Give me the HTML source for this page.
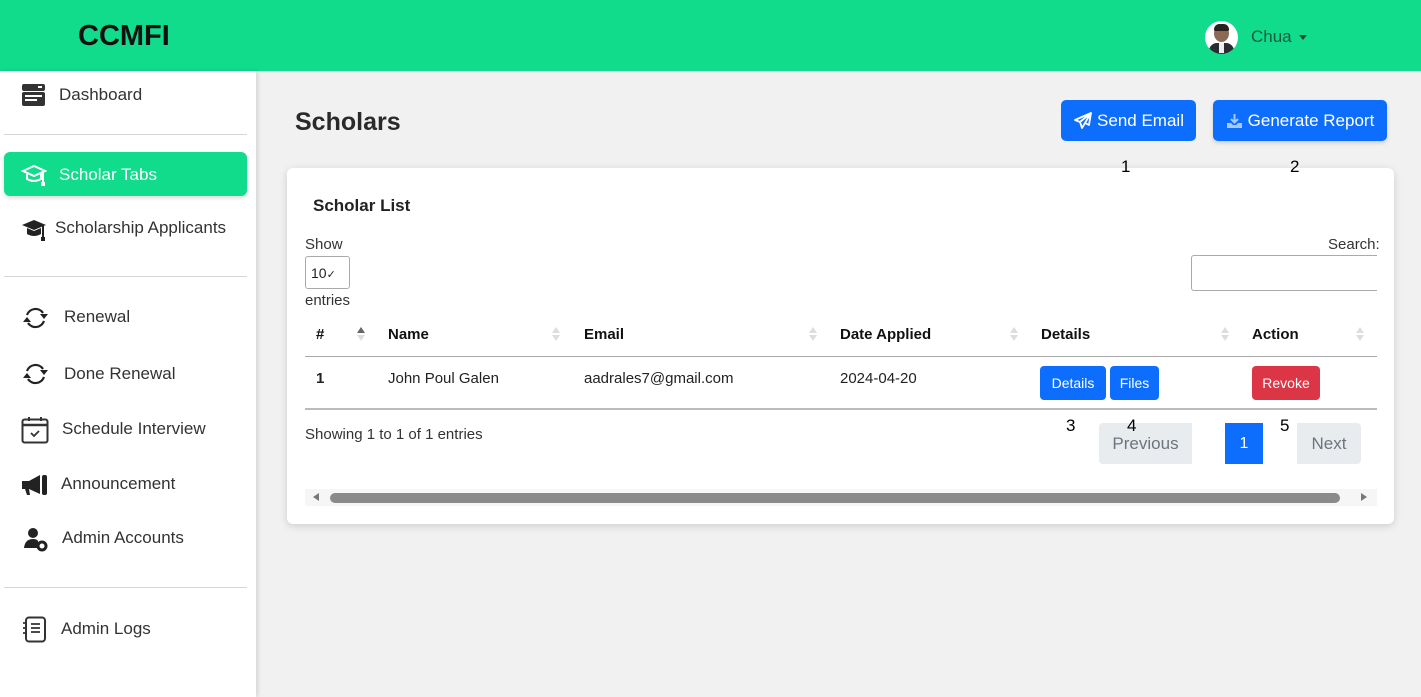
<!DOCTYPE html>
<html><head><meta charset="utf-8"><style>
*{box-sizing:border-box;margin:0;padding:0}
body{width:1421px;height:697px;overflow:hidden;background:#f1f1f1;font-family:"Liberation Sans",sans-serif;color:#212529;position:relative}
.a{position:absolute;white-space:nowrap}
.hdr{left:0;top:0;width:1421px;height:71px;background:#10dc8c}
.side{left:0;top:71px;width:256px;height:626px;background:#fff;box-shadow:2px 0 4px rgba(0,0,0,.12)}
.nav{font-size:17px;color:#333}
.hr{height:1px;background:#d6d6d6;left:4px;width:243px}
.btn{background:#0d6efd;color:#fff;border-radius:5px;display:flex;align-items:center;justify-content:center}
.th{font-weight:bold;font-size:15px;color:#111}
.td{font-size:15px;color:#222}
.sort{width:8px}
.sort:before{content:"";position:absolute;left:0;top:0;border:4px solid transparent;border-bottom:6px solid #ddd;border-top:0}
.sort:after{content:"";position:absolute;left:0;top:8px;border:4px solid transparent;border-top:6px solid #ddd;border-bottom:0}
.num{font-size:17px;color:#000;z-index:5}
</style></head><body>
<div class="a hdr"></div>
<div class="a" style="left:78px;top:20px;font-size:29px;font-weight:bold;color:#111">CCMFI</div>
<div class="a" style="left:1205px;top:21px;width:33px;height:33px;border-radius:50%;background:#fff;overflow:hidden">
<div style="position:absolute;left:9px;top:4px;width:15px;height:17px;border-radius:50%;background:#8a6a55"></div>
<div style="position:absolute;left:9px;top:3px;width:15px;height:7px;border-radius:7px 7px 2px 2px;background:#2a2220"></div>
<div style="position:absolute;left:4px;top:22px;width:25px;height:14px;border-radius:8px 8px 0 0;background:#2b2b33"></div>
<div style="position:absolute;left:14px;top:22px;width:5px;height:10px;background:#eee"></div></div>
<div class="a" style="left:1251px;top:27px;font-size:17px;color:#1d5a40">Chua</div>
<div class="a" style="left:1299px;top:35px;border:4px solid transparent;border-top:5px solid #1d4a36;border-bottom:0"></div>

<div class="a side"></div>
<svg class="a" style="left:21px;top:83px" width="25" height="24" viewBox="0 0 25 24"><rect x="1" y="1" width="23" height="7" rx="2" fill="#333"/><rect x="1" y="9" width="23" height="14" rx="2" fill="#333"/><rect x="4" y="12" width="17" height="2" fill="#fff"/><rect x="4" y="16" width="12" height="2" fill="#fff"/><rect x="17" y="3" width="4" height="2" fill="#fff"/></svg>
<div class="a nav" style="left:59px;top:85px">Dashboard</div>
<div class="a hr" style="top:134px"></div>
<div class="a" style="left:4px;top:152px;width:243px;height:44px;background:#10dc8c;border-radius:6px;box-shadow:0 2px 4px rgba(0,0,0,.15)"></div>
<svg class="a" style="left:21px;top:163px" width="26" height="25" viewBox="0 0 26 25"><path d="M2 8 L13 3 L24 8 L13 13 Z" fill="none" stroke="#fff" stroke-width="2"/><path d="M6 11 V16 Q13 20 20 16 V11" fill="none" stroke="#fff" stroke-width="2"/><path d="M22 9 V20" stroke="#fff" stroke-width="2"/><rect x="20" y="19" width="4" height="4" fill="#fff"/></svg>
<div class="a nav" style="left:59px;top:165px;color:#fff">Scholar Tabs</div>
<svg class="a" style="left:21px;top:216px" width="26" height="26" viewBox="0 0 26 26"><path d="M1 9 L13 4 L25 9 L13 14 Z" fill="#222"/><path d="M6 12 V18 Q13 22 20 18 V12 L13 15 Z" fill="#222"/><path d="M22 10 V22" stroke="#222" stroke-width="2"/><rect x="20" y="21" width="4" height="4" fill="#222"/></svg>
<div class="a nav" style="left:55px;top:218px">Scholarship Applicants</div>
<div class="a hr" style="top:276px"></div>
<svg class="a" style="left:21px;top:305px" width="29" height="26" viewBox="0 0 29 26"><path d="M6 10 A9 9 0 0 1 22 8" fill="none" stroke="#222" stroke-width="2.2"/><path d="M23 16 A9 9 0 0 1 7 18" fill="none" stroke="#222" stroke-width="2.2"/><path d="M19 9 H27 L23 14 Z" fill="#222"/><path d="M2 17 H10 L6 12 Z" fill="#222"/></svg>
<div class="a nav" style="left:64px;top:307px">Renewal</div>
<svg class="a" style="left:21px;top:361px" width="29" height="26" viewBox="0 0 29 26"><path d="M6 10 A9 9 0 0 1 22 8" fill="none" stroke="#222" stroke-width="2.2"/><path d="M23 16 A9 9 0 0 1 7 18" fill="none" stroke="#222" stroke-width="2.2"/><path d="M19 9 H27 L23 14 Z" fill="#222"/><path d="M2 17 H10 L6 12 Z" fill="#222"/></svg>
<div class="a nav" style="left:64px;top:364px">Done Renewal</div>
<svg class="a" style="left:21px;top:416px" width="28" height="28" viewBox="0 0 28 28"><rect x="1.5" y="3.5" width="25" height="23" rx="2" fill="none" stroke="#333" stroke-width="2"/><path d="M1.5 9 H26.5" stroke="#333" stroke-width="2.5"/><path d="M8 1 V5 M20 1 V5" stroke="#333" stroke-width="2"/><path d="M10 17 L13 20 L18 15" fill="none" stroke="#333" stroke-width="1.8"/></svg>
<div class="a nav" style="left:62px;top:419px">Schedule Interview</div>
<svg class="a" style="left:21px;top:473px" width="27" height="24" viewBox="0 0 27 24"><path d="M1 8 H8 L19 2 V21 L8 16 H1 Z" fill="#222"/><rect x="21" y="2" width="5" height="20" rx="2" fill="#222"/><path d="M4 16 L6 22 H9 L8 16Z" fill="#222"/></svg>
<div class="a nav" style="left:61px;top:474px">Announcement</div>
<svg class="a" style="left:23px;top:527px" width="26" height="26" viewBox="0 0 26 26"><circle cx="10" cy="6" r="5" fill="#222"/><path d="M1 21 Q2 12 10 12 Q14 12 15 14 V21 Z" fill="#222"/><circle cx="19" cy="19" r="4" fill="none" stroke="#222" stroke-width="3"/></svg>
<div class="a nav" style="left:62px;top:528px">Admin Accounts</div>
<div class="a hr" style="top:587px"></div>
<svg class="a" style="left:21px;top:616px" width="26" height="27" viewBox="0 0 26 27"><rect x="5" y="1.5" width="19" height="24" rx="3" fill="none" stroke="#333" stroke-width="2"/><path d="M10 8 H19 M10 12 H19 M10 16 H19 M2 7 H6 M2 12 H6 M2 17 H6" stroke="#333" stroke-width="1.7"/></svg>
<div class="a nav" style="left:61px;top:619px">Admin Logs</div>

<div class="a" style="left:295px;top:108px;font-size:25px;font-weight:bold;color:#2a2a2a">Scholars</div>
<div class="a btn" style="left:1061px;top:100px;width:135px;height:41px;font-size:17px"><svg width="20" height="18" viewBox="0 0 20 18" style="margin-right:4px"><path d="M18 1 L2 8 L7 10 L9 16 L12 11 L16 13 Z M7 10 L18 1 L12 11" fill="none" stroke="#fff" stroke-width="1.8" stroke-linejoin="round"/></svg>Send Email</div>
<div class="a btn" style="left:1213px;top:100px;width:174px;height:41px;font-size:17px;box-shadow:0 2px 4px rgba(0,0,0,.15)"><svg width="17" height="16" viewBox="0 0 17 16" style="margin-right:5px"><path d="M8.5 1 V9 M5 6 L8.5 9.5 L12 6" fill="none" stroke="#a9c8ff" stroke-width="2"/><path d="M1 10 V15 H16 V10 H12 L10 12 H7 L5 10 Z" fill="#a9c8ff"/></svg>Generate Report</div>

<div class="a" style="left:287px;top:168px;width:1107px;height:356px;background:#fff;border-radius:6px;box-shadow:0 2px 8px rgba(0,0,0,.15)"></div>
<div class="a num" style="left:1121px;top:157px">1</div>
<div class="a num" style="left:1290px;top:157px">2</div>
<div class="a" style="left:313px;top:196px;font-size:17px;font-weight:bold;color:#222">Scholar List</div>
<div class="a" style="left:305px;top:236px;font-size:15px;color:#333">Show</div>
<div class="a" style="left:305px;top:256px;width:45px;height:33px;border:1px solid #aaa;border-radius:3px;font-size:14px;padding:8px 0 0 5px;color:#222">10<span style="font-size:11px">✓</span></div>
<div class="a" style="left:305px;top:292px;font-size:15px;color:#333">entries</div>
<div class="a" style="left:1328px;top:236px;font-size:15px;color:#333">Search:</div>
<div class="a" style="left:1191px;top:255px;width:186px;height:36px;border:1px solid #aaa;border-right:none;border-radius:3px 0 0 3px"></div>

<div class="a th" style="left:316px;top:326px">#</div>
<div class="a sort" style="left:357px;top:327px"></div>
<div class="a" style="left:357px;top:327px;border:4px solid transparent;border-bottom:6px solid #666;border-top:0"></div>
<div class="a th" style="left:388px;top:326px">Name</div>
<div class="a sort" style="left:552px;top:327px"></div>
<div class="a th" style="left:584px;top:326px">Email</div>
<div class="a sort" style="left:809px;top:327px"></div>
<div class="a th" style="left:840px;top:326px">Date Applied</div>
<div class="a sort" style="left:1010px;top:327px"></div>
<div class="a th" style="left:1041px;top:326px">Details</div>
<div class="a sort" style="left:1221px;top:327px"></div>
<div class="a th" style="left:1252px;top:326px">Action</div>
<div class="a sort" style="left:1356px;top:327px"></div>
<div class="a" style="left:305px;top:356px;width:1072px;height:1px;background:#aaa"></div>
<div class="a td" style="left:316px;top:370px;font-weight:bold">1</div>
<div class="a td" style="left:388px;top:370px">John Poul Galen</div>
<div class="a td" style="left:584px;top:370px">aadrales7@gmail.com</div>
<div class="a td" style="left:840px;top:370px">2024-04-20</div>
<div class="a btn" style="left:1040px;top:366px;width:66px;height:34px;font-size:14px;border-radius:4px">Details</div>
<div class="a btn" style="left:1110px;top:366px;width:49px;height:34px;font-size:14px;border-radius:4px">Files</div>
<div class="a btn" style="left:1252px;top:366px;width:68px;height:34px;font-size:14px;border-radius:4px;background:#dc3545">Revoke</div>
<div class="a" style="left:305px;top:408px;width:1072px;height:2px;background:#bbb"></div>
<div class="a" style="left:305px;top:426px;font-size:15px;color:#333">Showing 1 to 1 of 1 entries</div>
<div class="a" style="left:1099px;top:423px;width:93px;height:41px;background:#e9ecef;border-radius:4px 0 0 4px;font-size:17px;color:#6c757d;text-align:center;line-height:41px">Previous</div>
<div class="a" style="left:1225px;top:423px;width:38px;height:41px;background:#0d6efd;color:#fff;font-size:16px;text-align:center;line-height:41px">1</div>
<div class="a" style="left:1297px;top:423px;width:64px;height:41px;background:#e9ecef;border-radius:0 4px 4px 0;font-size:17px;color:#6c757d;text-align:center;line-height:41px">Next</div>
<div class="a num" style="left:1066px;top:416px">3</div>
<div class="a num" style="left:1127px;top:416px">4</div>
<div class="a num" style="left:1280px;top:416px">5</div>
<div class="a" style="left:305px;top:489px;width:1072px;height:17px;background:#f6f6f6"></div>
<div class="a" style="left:313px;top:493px;border:4px solid transparent;border-right:6px solid #777;border-left:0"></div>
<div class="a" style="left:330px;top:493px;width:1010px;height:10px;border-radius:5px;background:#8a8a8a"></div>
<div class="a" style="left:1361px;top:493px;border:4px solid transparent;border-left:6px solid #777;border-right:0"></div>
</body></html>
